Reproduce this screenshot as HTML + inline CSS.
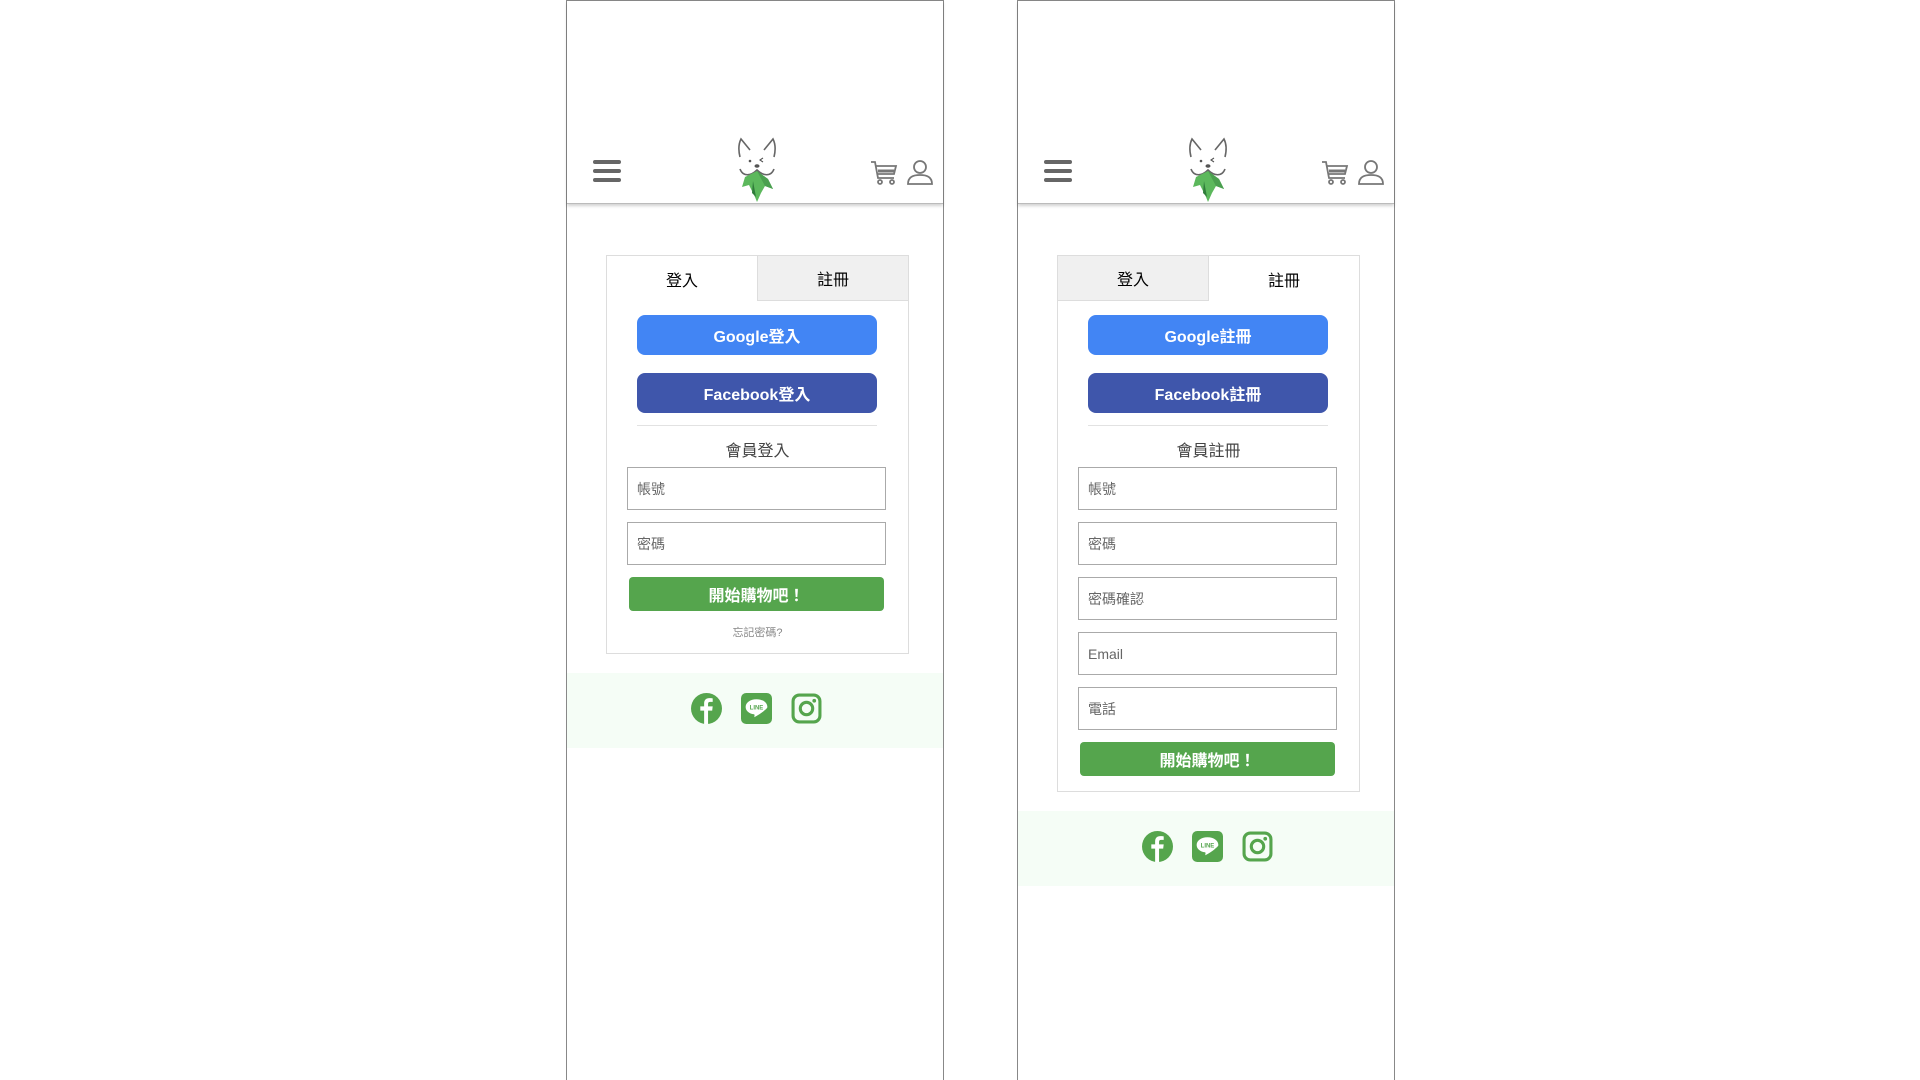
<!DOCTYPE html>
<html><head><meta charset="utf-8">
<style>
*{box-sizing:border-box;margin:0;padding:0}
body{width:1920px;height:1080px;background:#fff;position:relative;overflow:hidden;font-family:"Liberation Sans","Noto Sans CJK TC",sans-serif}
.ph{position:absolute;top:0;width:378px;height:1080px;border:1.5px solid #888;border-bottom:none}
.hdr{position:absolute;left:0;top:0;width:100%;height:203px;border-bottom:1px solid #bbb;box-shadow:0 2px 3px rgba(0,0,0,.18)}
.ham{position:absolute;left:26px;top:159px;width:28px}
.ham i{display:block;height:4px;background:#666;border-radius:2px;margin-bottom:5px}
.logo{position:absolute;left:168px;top:136px}
.cart{position:absolute;left:303px;top:158px}
.user{position:absolute;left:340px;top:159px}
.card{position:absolute;left:39px;top:254px;width:303px;border:1px solid #ddd;background:#fff}
.tabs{display:flex;height:45px}
.tab{flex:1;display:flex;align-items:center;justify-content:center;font-size:16px;color:#000}
.tab.off{background:#f0f0f0;border-bottom:1px solid #ddd}
.tab.off.l{border-right:1px solid #ddd}
.tab.off.r{border-left:1px solid #ddd}
.btn{position:absolute;left:30px;width:240px;height:40px;border-radius:8px;color:#fff;font-size:16px;font-weight:bold;display:flex;align-items:center;justify-content:center}
.g{background:#4285f4;top:59px}
.f{background:#3f56ab;top:117px}
.div{position:absolute;left:30px;width:240px;top:169px;height:1px;background:#e2e2e2}
.ttl{position:absolute;left:0;width:100%;top:181px;text-align:center;font-size:16px;color:#444}
.in{position:absolute;left:20px;width:259px;height:43px;border:1.5px solid #aaa;font-size:14px;color:#666;padding-left:9px;display:flex;align-items:center}
.go{position:absolute;left:22px;width:255px;height:34px;background:#55a54d;border-radius:4px;color:#fff;font-weight:bold;font-size:16px;display:flex;align-items:center;justify-content:center}
.fg{position:absolute;left:0;width:100%;text-align:center;font-size:11px;color:#888}
.ft{position:absolute;left:0;width:100%;height:75px;background:#f5fdf6}
.ic{position:absolute;top:20px}
</style></head><body>

<!-- LEFT PHONE -->
<div class="ph" style="left:566px">
  <div class="hdr">
    <div class="ham"><i></i><i></i><i></i></div>
    <svg class="logo" width="44" height="66" viewBox="0 0 44 66">
      <path d="M5 20 C3 12 4 6 6 2 L15 13 M39 20 C41 12 40 6 38 2 L29 13" stroke="#666" stroke-width="1.6" fill="none"/>
      <circle cx="15" cy="24" r="1.3" fill="#555"/><path d="M28 21 l-3 2 l3 2" stroke="#555" stroke-width="1.1" fill="none"/>
      <ellipse cx="22" cy="29" rx="2.5" ry="1.8" fill="#555"/>
      <path d="M5 32 C8 40 16 39 22 33 C28 39 36 40 39 32" stroke="#666" stroke-width="1.6" fill="none"/>
      <path d="M22 34 L10 40 L7 50 L14 48 L20 60 L22 65 L26 56 L30 49 L38 52 L33 42 Z" fill="#5cb85c"/>
      <path d="M22 34 L30 49 L38 52 L33 42 Z" fill="#4a9f4f"/>
      <path d="M18 44 L17 56 L21 60 Z" fill="#2f7d3a"/>
    </svg>
    <svg class="cart" width="28" height="27" viewBox="0 0 28 27" fill="none" stroke="#777" stroke-width="1.8">
      <path d="M1 3 H5 L8 19 H24 M6 7 H26 L24 15 H7"/><path d="M8 12 H24" stroke-width="3"/>
      <circle cx="10" cy="23" r="2"/><circle cx="22" cy="23" r="2"/>
    </svg>
    <svg class="user" width="26" height="26" viewBox="0 0 26 26" fill="none" stroke="#777" stroke-width="1.8">
      <circle cx="13" cy="7" r="6"/><path d="M1 24 C1 17 6 15 13 15 C20 15 25 17 25 24 Z"/>
    </svg>
  </div>
  <div class="card" style="height:399px">
    <div class="tabs"><div class="tab">登入</div><div class="tab off r">註冊</div></div>
    <div class="btn g">Google登入</div>
    <div class="btn f">Facebook登入</div>
    <div class="div"></div>
    <div class="ttl">會員登入</div>
    <div class="in" style="top:211px">帳號</div>
    <div class="in" style="top:266px">密碼</div>
    <div class="go" style="top:321px">開始購物吧！</div>
    <div class="fg" style="top:368px">忘記密碼?</div>
  </div>
  <div class="ft" style="top:672px">
    <svg class="ic" style="left:124px" width="31" height="31" viewBox="0 0 30 30"><circle cx="15" cy="15" r="15" fill="#55a54d"/><path d="M16.5 30 V17 H20.5 L21 13 H16.5 V10.5 C16.5 9.3 17 8.6 18.5 8.6 H21 V5.2 C20 5 18.8 5 17.6 5 C14.6 5 12.7 6.8 12.7 10 V13 H9 V17 H12.7 V30 Z" fill="#fff"/></svg>
    <svg class="ic" style="left:174px" width="31" height="31" viewBox="0 0 30 30"><rect width="30" height="30" rx="5" fill="#55a54d"/><path d="M15 6 C8.5 6 4.5 9.5 4.5 13.5 C4.5 17.3 8 20 12.5 20.6 C13.5 20.8 13 22.5 12.8 23.5 C14.5 22.7 20 19.5 22.5 17 C24.5 15.3 25.5 14.5 25.5 13.5 C25.5 9.5 21.5 6 15 6 Z" fill="#fff"/><text x="15" y="16" font-size="5.8" font-weight="bold" fill="#55a54d" text-anchor="middle" font-family="Liberation Sans">LINE</text></svg>
    <svg class="ic" style="left:224px" width="31" height="31" viewBox="0 0 30 30" fill="none" stroke="#55a54d"><rect x="2" y="2" width="26" height="26" rx="6" stroke-width="3"/><circle cx="15" cy="15" r="6" stroke-width="3"/><circle cx="22.5" cy="7.5" r="1.8" fill="#55a54d" stroke="none"/></svg>
  </div>
</div>

<!-- RIGHT PHONE -->
<div class="ph" style="left:1017px">
  <div class="hdr">
    <div class="ham"><i></i><i></i><i></i></div>
    <svg class="logo" width="44" height="66" viewBox="0 0 44 66">
      <path d="M5 20 C3 12 4 6 6 2 L15 13 M39 20 C41 12 40 6 38 2 L29 13" stroke="#666" stroke-width="1.6" fill="none"/>
      <circle cx="15" cy="24" r="1.3" fill="#555"/><path d="M28 21 l-3 2 l3 2" stroke="#555" stroke-width="1.1" fill="none"/>
      <ellipse cx="22" cy="29" rx="2.5" ry="1.8" fill="#555"/>
      <path d="M5 32 C8 40 16 39 22 33 C28 39 36 40 39 32" stroke="#666" stroke-width="1.6" fill="none"/>
      <path d="M22 34 L10 40 L7 50 L14 48 L20 60 L22 65 L26 56 L30 49 L38 52 L33 42 Z" fill="#5cb85c"/>
      <path d="M22 34 L30 49 L38 52 L33 42 Z" fill="#4a9f4f"/>
      <path d="M18 44 L17 56 L21 60 Z" fill="#2f7d3a"/>
    </svg>
    <svg class="cart" width="28" height="27" viewBox="0 0 28 27" fill="none" stroke="#777" stroke-width="1.8">
      <path d="M1 3 H5 L8 19 H24 M6 7 H26 L24 15 H7"/><path d="M8 12 H24" stroke-width="3"/>
      <circle cx="10" cy="23" r="2"/><circle cx="22" cy="23" r="2"/>
    </svg>
    <svg class="user" width="26" height="26" viewBox="0 0 26 26" fill="none" stroke="#777" stroke-width="1.8">
      <circle cx="13" cy="7" r="6"/><path d="M1 24 C1 17 6 15 13 15 C20 15 25 17 25 24 Z"/>
    </svg>
  </div>
  <div class="card" style="height:537px">
    <div class="tabs"><div class="tab off l">登入</div><div class="tab">註冊</div></div>
    <div class="btn g">Google註冊</div>
    <div class="btn f">Facebook註冊</div>
    <div class="div"></div>
    <div class="ttl">會員註冊</div>
    <div class="in" style="top:211px">帳號</div>
    <div class="in" style="top:266px">密碼</div>
    <div class="in" style="top:321px">密碼確認</div>
    <div class="in" style="top:376px">Email</div>
    <div class="in" style="top:431px">電話</div>
    <div class="go" style="top:486px">開始購物吧！</div>
  </div>
  <div class="ft" style="top:810px">
    <svg class="ic" style="left:124px" width="31" height="31" viewBox="0 0 30 30"><circle cx="15" cy="15" r="15" fill="#55a54d"/><path d="M16.5 30 V17 H20.5 L21 13 H16.5 V10.5 C16.5 9.3 17 8.6 18.5 8.6 H21 V5.2 C20 5 18.8 5 17.6 5 C14.6 5 12.7 6.8 12.7 10 V13 H9 V17 H12.7 V30 Z" fill="#fff"/></svg>
    <svg class="ic" style="left:174px" width="31" height="31" viewBox="0 0 30 30"><rect width="30" height="30" rx="5" fill="#55a54d"/><path d="M15 6 C8.5 6 4.5 9.5 4.5 13.5 C4.5 17.3 8 20 12.5 20.6 C13.5 20.8 13 22.5 12.8 23.5 C14.5 22.7 20 19.5 22.5 17 C24.5 15.3 25.5 14.5 25.5 13.5 C25.5 9.5 21.5 6 15 6 Z" fill="#fff"/><text x="15" y="16" font-size="5.8" font-weight="bold" fill="#55a54d" text-anchor="middle" font-family="Liberation Sans">LINE</text></svg>
    <svg class="ic" style="left:224px" width="31" height="31" viewBox="0 0 30 30" fill="none" stroke="#55a54d"><rect x="2" y="2" width="26" height="26" rx="6" stroke-width="3"/><circle cx="15" cy="15" r="6" stroke-width="3"/><circle cx="22.5" cy="7.5" r="1.8" fill="#55a54d" stroke="none"/></svg>
  </div>
</div>
</body></html>
